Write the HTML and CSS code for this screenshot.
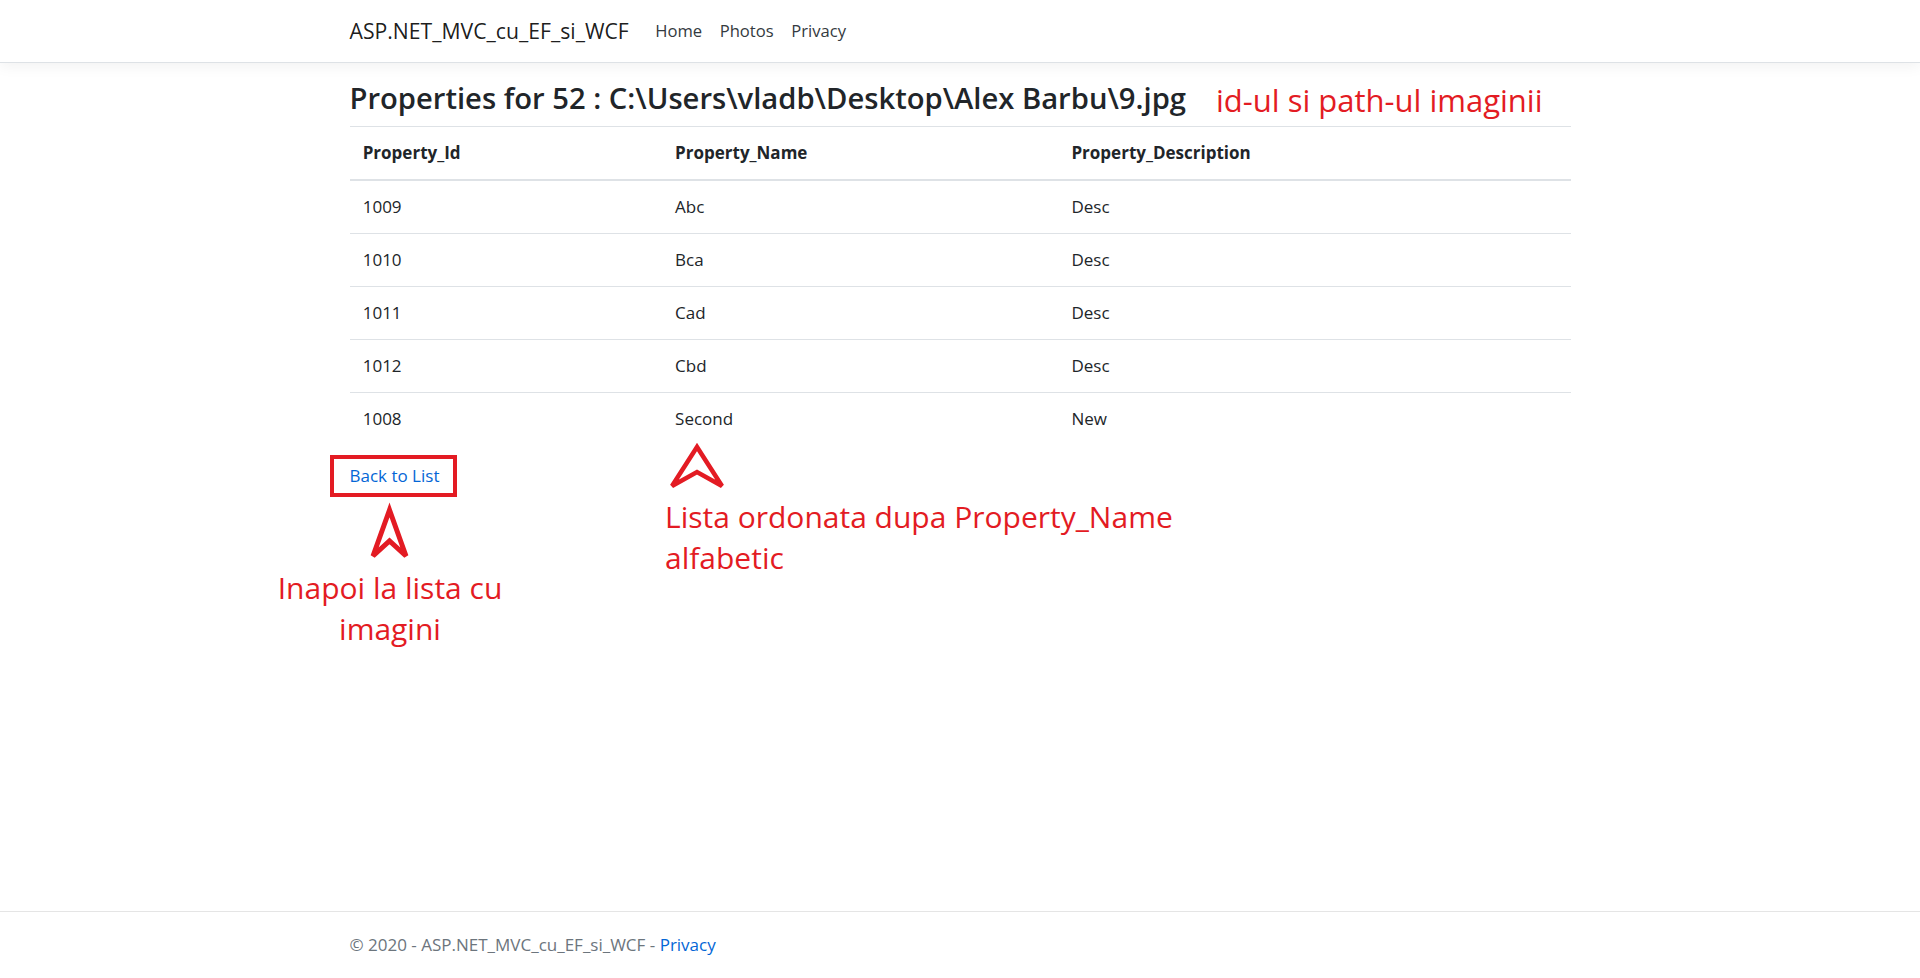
FILE: index.html
```html
<!DOCTYPE html>
<html lang="en">
<head>
<meta charset="utf-8">
<title>Properties - ASP.NET_MVC_cu_EF_si_WCF</title>
<link rel="stylesheet" href="styles.css">
</head>
<body>
<header class="site-header">
  <nav class="navbar">
    <div class="container nav-inner">
      <a class="brand" href="#">ASP.NET_MVC_cu_EF_si_WCF</a>
      <ul class="nav-list">
        <li><a class="nav-link" href="#">Home</a></li>
        <li><a class="nav-link" href="#">Photos</a></li>
        <li><a class="nav-link" href="#">Privacy</a></li>
      </ul>
    </div>
  </nav>
</header>

<main class="container main">
  <h3 class="page-title">Properties for 52 : C:\Users\vladb\Desktop\Alex Barbu\9.jpg</h3>
  <table class="table">
    <thead>
      <tr>
        <th class="col-id">Property_Id</th>
        <th class="col-name">Property_Name</th>
        <th>Property_Description</th>
      </tr>
    </thead>
    <tbody>
      <tr><td>1009</td><td>Abc</td><td>Desc</td></tr>
      <tr><td>1010</td><td>Bca</td><td>Desc</td></tr>
      <tr><td>1011</td><td>Cad</td><td>Desc</td></tr>
      <tr><td>1012</td><td>Cbd</td><td>Desc</td></tr>
      <tr><td>1008</td><td>Second</td><td>New</td></tr>
    </tbody>
  </table>
  <div class="back"><a class="link" href="#">Back to List</a></div>
</main>

<footer class="footer">
  <div class="container">&copy; 2020 - ASP.NET_MVC_cu_EF_si_WCF - <a class="link" href="#">Privacy</a></div>
</footer>

<div class="annotations">
  <svg class="marks" width="1920" height="978" viewBox="0 0 1920 978" xmlns="http://www.w3.org/2000/svg">
    <rect x="332" y="457" width="123" height="38" fill="none" stroke="#e31b23" stroke-width="4"/>
    <polygon points="389.5,510 373,556 389.5,541 406,556" fill="none" stroke="#e31b23" stroke-width="5" stroke-linejoin="miter"/>
    <polygon points="697,447 672,486 697,472 722,486" fill="none" stroke="#e31b23" stroke-width="4.5" stroke-linejoin="miter"/>
  </svg>
  <div class="note note-id">id-ul si path-ul imaginii</div>
  <div class="note note-sort">Lista ordonata dupa Property_Name<br>alfabetic</div>
  <div class="note note-back">Inapoi la lista cu<br>imagini</div>
</div>
</body>
</html>
```

FILE: styles.css
```css
html, body {
  height: 100%;
}

body {
  margin: 0;
  min-height: 100vh;
  display: flex;
  flex-direction: column;
  font-family: "Open Sans", "Noto Sans", "Liberation Sans", sans-serif;
  font-size: 17px;
  line-height: 26.4px;
  color: #212529;
  background: #fff;
  position: relative;
}

a {
  text-decoration: none;
}

.container {
  width: 1221px;
  margin: 0 auto;
}

.navbar {
  background: #fff;
  border-bottom: 1px solid #dee2e6;
  box-shadow: 0 4.4px 13.2px rgba(0, 0, 0, 0.05);
  padding: 8.8px 0;
  margin-bottom: 17.6px;
}

.nav-inner {
  display: flex;
  align-items: center;
}

.brand {
  font-size: 21.2px;
  line-height: 33px;
  padding: 5.5px 0;
  margin-right: 17.6px;
  color: rgba(0, 0, 0, 0.9);
}

.nav-list {
  display: flex;
  list-style: none;
  margin: 0;
  padding: 0;
}

.nav-link {
  display: block;
  padding: 8.8px;
  font-size: 16.6px;
  color: #343a40;
}

.page-title {
  font-size: 29.2px;
  line-height: 37px;
  font-weight: 600;
  margin: 0 0 8.8px;
}

.table {
  width: 100%;
  border-collapse: collapse;
  margin-bottom: 17.6px;
}

.table th,
.table td {
  padding: 13px 13.2px;
  line-height: 26px;
  text-align: left;
  vertical-align: top;
  border-top: 1px solid #dee2e6;
}

.table thead th {
  font-weight: 700;
  border-bottom: 2px solid #dee2e6;
}

.col-id {
  width: 286px;
}

.col-name {
  width: 370px;
}

.link {
  color: #0366d6;
}

.back {
  line-height: 26.4px;
}

.footer {
  margin-top: auto;
  border-top: 1px solid #e5e5e5;
  line-height: 66px;
  color: #6c757d;
  white-space: nowrap;
}

.annotations {
  position: absolute;
  left: 0;
  top: 0;
  width: 1920px;
  height: 978px;
  pointer-events: none;
}

.marks {
  position: absolute;
  left: 0;
  top: 0;
}

.note {
  position: absolute;
  color: #e31b23;
  font-size: 30px;
  line-height: 41px;
  white-space: nowrap;
}

.note-id {
  left: 1216px;
  top: 80px;
  line-height: 40px;
  font-size: 31px;
}

.note-sort {
  left: 665px;
  top: 496px;
}

.note-back {
  left: 390px;
  top: 567px;
  transform: translateX(-50%);
  text-align: center;
}
```
